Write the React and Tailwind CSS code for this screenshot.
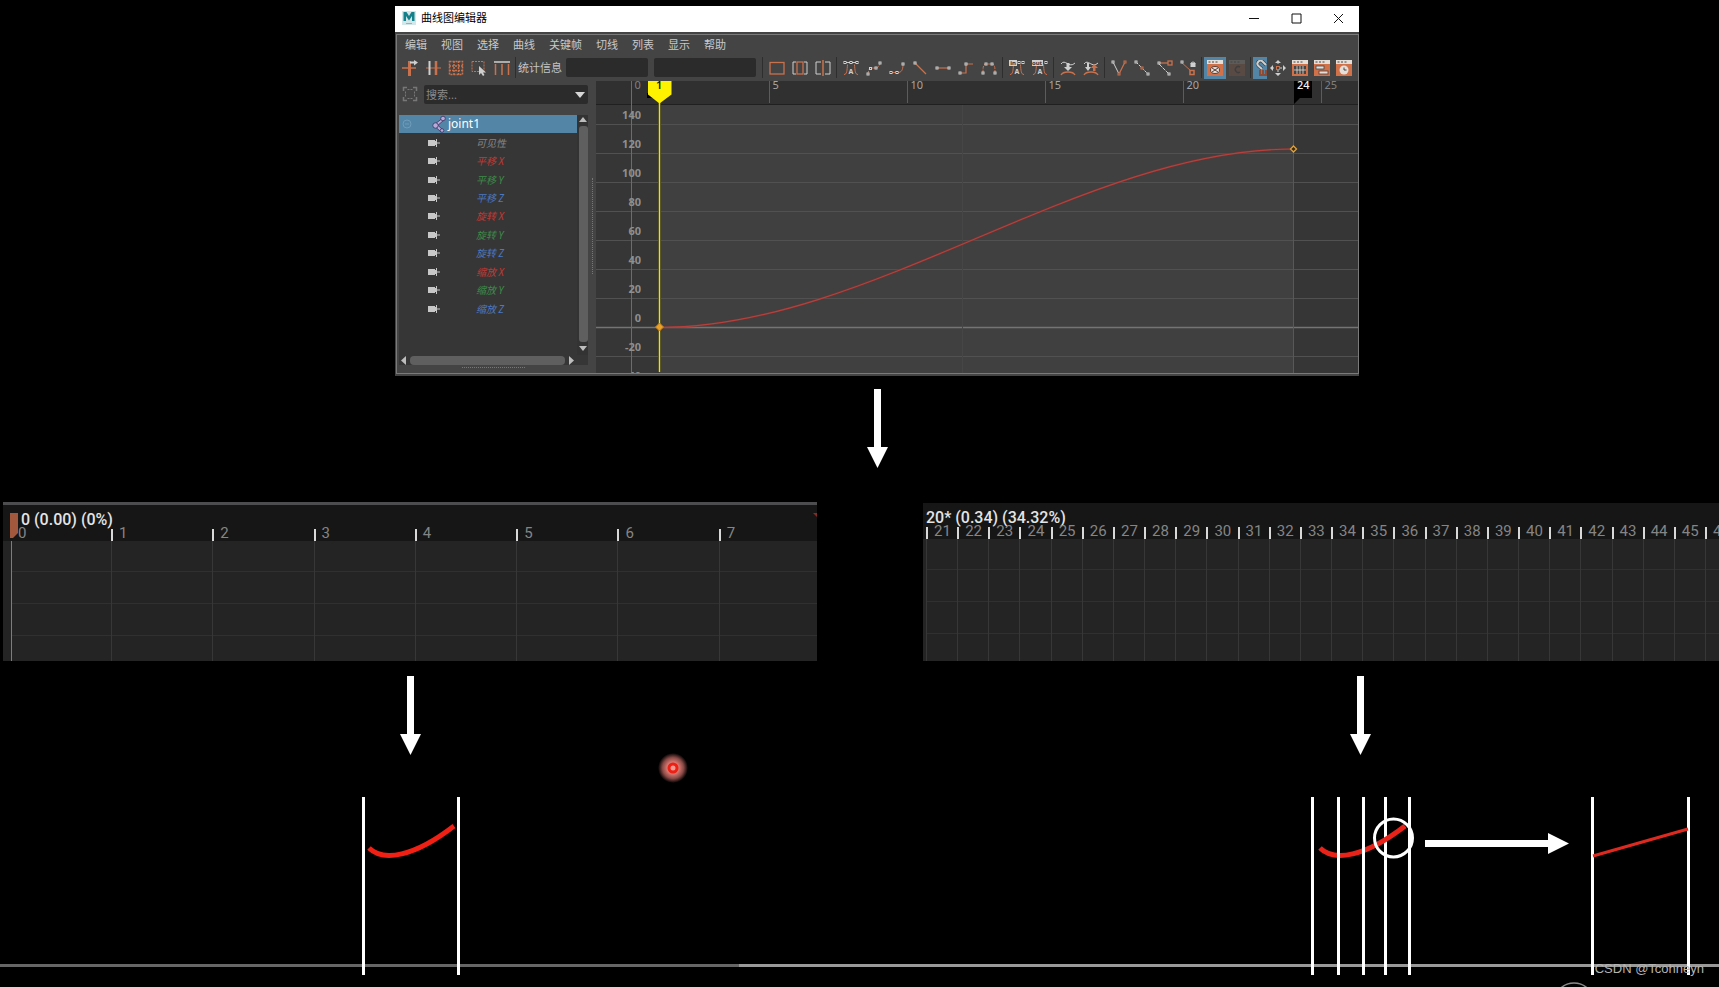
import React from 'react'
import clsx from 'clsx'

const ORANGE = '#c9714d'
const LIGHT = '#cfcfcf'

const menus = ['编辑', '视图', '选择', '曲线', '关键帧', '切线', '列表', '显示', '帮助']

const channels = [
    { name: '可见性', color: 'text-[#858585]' },
    { name: '平移 X', color: 'text-[#c23a35]' },
    { name: '平移 Y', color: 'text-[#3d8c49]' },
    { name: '平移 Z', color: 'text-[#4c78c4]' },
    { name: '旋转 X', color: 'text-[#c23a35]' },
    { name: '旋转 Y', color: 'text-[#3d8c49]' },
    { name: '旋转 Z', color: 'text-[#4c78c4]' },
    { name: '缩放 X', color: 'text-[#c23a35]' },
    { name: '缩放 Y', color: 'text-[#3d8c49]' },
    { name: '缩放 Z', color: 'text-[#4c78c4]' },
]

/* small hollow key handle used by most of the tangent icons */
function Key({ x, y, color = LIGHT }) {
    return <rect x={x - 1} y={y - 1} width="2" height="2" fill="#444" stroke={color} />
}

function Bell() {
    return (
        <>
            <path d="M1 14.500c3 0 3-4 3.500-10M15 14.500c-3 0-3-4-3.500-10" fill="none" stroke={ORANGE} />
            <text x="8" y="14" textAnchor="middle" fontSize="7" fontWeight="700" fill={LIGHT}>A</text>
        </>
    )
}

function PanelFrame({ children }) {
    return (
        <>
            <rect x="0" y="0" width="16" height="16" fill="#d0714a" />
            <rect x="0" y="0" width="16" height="4" fill="#e4ddd8" />
            <path d="M1.500 2h2M5 2h2M8.500 2h2" stroke="#444" />
            {children}
        </>
    )
}

const icons = {
    insertKey: (
        <>
            <path d="M0 8h14" stroke={ORANGE} strokeWidth="1.500" />
            <path d="M7.500 1v15" stroke={ORANGE} strokeWidth="3" />
            <path d="M8 2.500h5" stroke={LIGHT} strokeWidth="2" />
            <path d="M12 0l4 2.500-4 3z" fill={LIGHT} />
        </>
    ),
    addKey: (
        <>
            <path d="M1 8h15" stroke={ORANGE} strokeWidth="1" />
            <path d="M4.500 1v14" stroke={LIGHT} strokeWidth="2" />
            <path d="M11 1v14" stroke={ORANGE} strokeWidth="2.500" />
        </>
    ),
    lattice: (
        <g stroke={ORANGE} strokeWidth="1.500" strokeDasharray="2 1" fill="none">
            <rect x="1.500" y="1.500" width="13" height="13" />
            <path d="M6 1v14M10.500 1v14M1 6h14M1 10.500h14" />
        </g>
    ),
    region: (
        <>
            <rect x="1" y="1.500" width="12" height="10" fill="none" stroke={ORANGE} strokeDasharray="2 1" />
            <path d="M8 6v9l2-2 2 3 1.500-1-1.500-2.500h3z" fill={LIGHT} />
        </>
    ),
    retime: (
        <>
            <path d="M0 2h16" stroke={LIGHT} strokeWidth="1.500" />
            <path d="M1.500 4v11M8 4v11M14.500 4v11" stroke={ORANGE} strokeWidth="1.500" />
        </>
    ),
    frameAll: <rect x="1" y="2.500" width="14" height="11.500" fill="none" stroke={ORANGE} strokeWidth="1.300" />,
    frameRange: (
        <>
            <path d="M4 2H1v12h3M12 2h3v12h-3" fill="none" stroke={LIGHT} />
            <rect x="5" y="2" width="6" height="12" fill="none" stroke={ORANGE} strokeWidth="1.300" />
        </>
    ),
    center: (
        <>
            <path d="M6 2H1v12h5M10 2h5v12h-5" fill="none" stroke={LIGHT} />
            <path d="M8 0v16" stroke={ORANGE} strokeWidth="1.500" />
        </>
    ),
    auto: (
        <>
            <path d="M1 2.500h14" stroke={LIGHT} />
            <Bell />
            <Key x={2} y={2.500} /><Key x={8} y={2.500} /><Key x={14} y={2.500} />
        </>
    ),
    spline: (
        <>
            <path d="M2 14c1-8 4-5.500 7-6s4-1 5-5" fill="none" stroke={ORANGE} strokeDasharray="3 1" />
            <Key x={2} y={14} /><Key x={4.500} y={8.500} /><Key x={10} y={8} /><Key x={14} y={3} />
        </>
    ),
    clamped: (
        <>
            <path d="M1 12.500h8c3 0 5-2 5-8" fill="none" stroke={ORANGE} />
            <Key x={2} y={12.500} /><Key x={8} y={12.500} /><Key x={14} y={4} />
        </>
    ),
    linear: (
        <>
            <path d="M3 3l11 11" stroke={ORANGE} strokeWidth="1.200" />
            <Key x={3} y={3} />
        </>
    ),
    flat: (
        <>
            <path d="M2 8h12" stroke={ORANGE} strokeWidth="1.200" />
            <Key x={2} y={8} /><Key x={14} y={8} />
        </>
    ),
    stepped: (
        <>
            <path d="M2 13h6V4h7" fill="none" stroke={ORANGE} strokeWidth="1.200" />
            <Key x={2} y={13} /><Key x={8} y={4} />
        </>
    ),
    plateau: (
        <>
            <path d="M2 13c0-5 0-9 3-9h6c3 0 3 4 3 9" fill="none" stroke={ORANGE} strokeDasharray="3 1" />
            <Key x={2} y={13} /><Key x={5} y={4} /><Key x={11} y={4} /><Key x={14} y={13} />
        </>
    ),
    inTangent: (
        <>
            <Bell />
            <rect x="0" y="0" width="8" height="6" fill={LIGHT} />
            <text x="4" y="5" textAnchor="middle" fontSize="6" fontWeight="700" fill="#333">in</text>
            <Key x={10} y={2.500} /><Key x={14} y={2.500} />
        </>
    ),
    outTangent: (
        <>
            <Bell />
            <rect x="0" y="0" width="11" height="6" fill={LIGHT} />
            <text x="5" y="5" textAnchor="middle" fontSize="6" fontWeight="700" fill="#333">out</text>
            <Key x={14} y={2.500} />
        </>
    ),
    bufferSnap: (
        <>
            <path d="M1 4c4-6 8 5 14-1" fill="none" stroke={LIGHT} />
            <path d="M6.500 3h3v4H12l-4 4-4-4h2.500z" fill={LIGHT} />
            <path d="M1 15c2-4 12-4 14 0" fill="none" stroke={ORANGE} strokeWidth="1.300" />
        </>
    ),
    bufferSwap: (
        <>
            <path d="M1 4c4-6 8 5 14-1" fill="none" stroke={LIGHT} />
            <path d="M4 3h2v4h2l-3 4-3-4h2z" fill={LIGHT} />
            <path d="M10 11h2.500V8H15l-4-4-3 4h2z" fill={ORANGE} />
            <path d="M1 15c2-4 12-4 14 0" fill="none" stroke={ORANGE} strokeWidth="1.300" />
        </>
    ),
    breakTangent: (
        <>
            <path d="M2 2l6 12" stroke={LIGHT} /><path d="M8 14l6-12" stroke={ORANGE} strokeWidth="1.300" />
            <Key x={2} y={2} /><Key x={8} y={14} color={ORANGE} /><Key x={14} y={2} color={ORANGE} />
        </>
    ),
    unify: (
        <>
            <path d="M2 2l12 12" stroke={LIGHT} strokeDasharray="3 1" />
            <Key x={2} y={2} /><Key x={8} y={8} color={ORANGE} /><Key x={14} y={14} />
        </>
    ),
    freeLength: (
        <>
            <path d="M2 3h11" stroke={ORANGE} strokeWidth="1.300" />
            <path d="M2 4l10 10" stroke={LIGHT} strokeDasharray="4 1" />
            <Key x={2} y={3} /><Key x={12} y={14} />
            <rect x="11" y="1" width="4" height="4" fill="#444" stroke={ORANGE} strokeWidth="1.300" />
        </>
    ),
    lockLength: (
        <>
            <path d="M1 2l10 9" stroke={ORANGE} />
            <Key x={2} y={2} />
            <rect x="10" y="10.500" width="4" height="4" fill="#444" stroke={ORANGE} strokeWidth="1.500" />
            <path d="M11 4a2 2 0 0 1 4 0" fill="none" stroke={LIGHT} />
            <rect x="10.500" y="3" width="5" height="4" fill={LIGHT} />
        </>
    ),
    timeSnap: (
        <PanelFrame>
            <ellipse cx="8" cy="10" rx="4.500" ry="3.500" fill="#e4ddd8" stroke="#5a4038" />
            <path d="M5 8l6 4M11 8l-6 4" stroke="#5a4038" />
        </PanelFrame>
    ),
    valueSnap: (
        <g opacity="0.150">
            <PanelFrame><path d="M11 7a3 3 0 1 0 0 5" fill="none" stroke="#222" strokeWidth="1.500" /></PanelFrame>
        </g>
    ),
    move: (
        <>
            <path d="M8 2v12M2 8h12" stroke={LIGHT} strokeDasharray="2 2" />
            <path d="M8 0l3 3H5zM8 16l3-3H5zM0 8l3-3v6zM16 8l-3-3v6z" fill={LIGHT} />
            <rect x="6.500" y="6.500" width="3" height="3" fill="#444" stroke={ORANGE} />
        </>
    ),
    dopeSheet: (
        <PanelFrame>
            <rect x="2" y="6" width="12" height="8" fill="#444" />
            <path d="M2 10h12M5 6v8M8 6v8M11 6v8" stroke="#e4ddd8" strokeWidth="0.800" />
        </PanelFrame>
    ),
    trax: (
        <PanelFrame>
            <rect x="2" y="6" width="8" height="3" fill="#e4ddd8" stroke="#444" strokeWidth="0.800" />
            <rect x="5" y="11" width="9" height="3" fill="#e4ddd8" stroke="#444" strokeWidth="0.800" />
        </PanelFrame>
    ),
    timeEditor: (
        <PanelFrame>
            <circle cx="8" cy="10" r="4.500" fill="#e4ddd8" />
            <path d="M8 7.500V10h2.500" fill="none" stroke="#444" />
        </PanelFrame>
    ),
}

function Tool({ name, wide = true, active }) {
    return (
        <button
            aria-label={name}
            className={clsx('flex h-[22px] shrink-0 items-center justify-center', wide ? 'w-[23px]' : 'w-[22px]', active && 'bg-[#5285a6]')}
        >
            <svg viewBox="0 0 16 16" className="size-4">{icons[name]}</svg>
        </button>
    )
}

function Separator() {
    return <span className="mx-[2px] h-[21px] w-px shrink-0 bg-[#2e2e2e]" />
}

function ToolBar() {
    return (
        <div className="flex h-[25px] items-center pb-[2px] pl-px">
            {['insertKey', 'addKey', 'lattice', 'region', 'retime'].map((n) => <Tool key={n} name={n} />)}
            <Separator />
            <label htmlFor="stat-time" className="shrink-0 text-[11px] leading-4 text-[#c4c4c4]">统计信息</label>
            <input id="stat-time" className="ml-1 h-[19px] w-[82px] rounded-xs bg-[#2b2b2b] px-1 text-[11px]" />
            <input aria-label="统计信息值" className="mr-1 ml-[6px] h-[19px] w-[102px] rounded-xs bg-[#2b2b2b] px-1 text-[11px]" />
            <Separator />
            {['frameAll', 'frameRange', 'center'].map((n) => <Tool key={n} name={n} />)}
            <Separator />
            {['auto', 'spline', 'clamped', 'linear', 'flat', 'stepped', 'plateau'].map((n) => <Tool key={n} name={n} />)}
            <Separator />
            {['inTangent', 'outTangent'].map((n) => <Tool key={n} name={n} />)}
            <Separator />
            {['bufferSnap', 'bufferSwap'].map((n) => <Tool key={n} name={n} />)}
            <Separator />
            {['breakTangent', 'unify', 'freeLength', 'lockLength'].map((n) => <Tool key={n} name={n} />)}
            <Separator />
            <Tool name="timeSnap" wide={false} active />
            <Tool name="valueSnap" wide={false} />
            <Separator />
            <button aria-label="magnet" className="flex h-[22px] w-[14px] shrink-0 items-center bg-[#5285a6]">
                <svg viewBox="0 0 14 16" className="h-4 w-[14px]">
                    <path d="M9 9L5.500 6a3 3 0 0 1 4-4.500L13 5" fill="none" stroke="#3b4650" strokeWidth="3.500" />
                    <path d="M9 9L5.500 6a3 3 0 0 1 4-4.500L13 5" fill="none" stroke={LIGHT} strokeWidth="2" />
                    <path d="M7 10v5h7M10 10v5M13 10v5" fill="none" stroke="#8d4a35" strokeWidth="2" />
                </svg>
            </button>
            {['move', 'dopeSheet', 'trax', 'timeEditor'].map((n) => <Tool key={n} name={n} wide={false} />)}
        </div>
    )
}

function Outliner() {
    return (
        <div className="flex w-[199px] shrink-0 flex-col pl-[2px]">
            <div className="flex h-[34px] items-start pt-1">
                <svg viewBox="0 0 16 16" className="mt-px ml-[3px] size-4" fill="none" stroke="#777">
                    <path d="M1.500 5V1.500H5M11 1.500h3.500V5M14.500 11v3.500H11M5 14.500H1.500V11" strokeWidth="1.500" />
                    <path d="M3.500 5.500v5M12.500 5.500v5M5.500 3.500h5M5.500 12.500h5" strokeDasharray="2 1" />
                </svg>
                <div className="ml-[6px] flex h-[19px] w-[164px] items-center rounded-xs bg-[#2b2b2b]">
                    <input
                        aria-label="搜索"
                        placeholder="搜索..."
                        className="h-full min-w-0 flex-1 pl-[2px] text-[11px] text-[#ccc] placeholder:text-[#8a8a8a]"
                    />
                    <button aria-label="搜索选项" className="flex h-full w-4 items-center justify-center">
                        <svg viewBox="0 0 10 6" className="h-[6px] w-[10px]"><path d="M0 0h10L5 6z" fill="#d6d6d6" /></svg>
                    </button>
                </div>
            </div>

            <div className="flex">
                <div className="w-[189px] bg-[#363636]">
                    <div className="flex h-[240px]">
                        {/* joint and its channels */}
                        <ul className="grid h-[203px] flex-1 auto-rows-fr">
                            <li className="flex items-center bg-[#5285a6] pl-[3px]">
                                <svg viewBox="0 0 10 10" className="size-[10px]" fill="none" stroke="#6f9cb8">
                                    <circle cx="5" cy="5" r="4" /><path d="M3 5h4" />
                                </svg>
                                <svg viewBox="0 0 14 18" className="ml-[20px] h-[18px] w-[14px]" fill="#b9a9d8" stroke="#3c3260" strokeWidth="0.800">
                                    <path d="M9.500 4L3 9l1.500 2.500L12 5z" />
                                    <path d="M3 11.500L9 17l1.500-2.500L5 9.500z" />
                                    <circle cx="11" cy="3.500" r="2.300" /><circle cx="3.500" cy="10.500" r="2.700" /><circle cx="10" cy="15.500" r="1.800" />
                                </svg>
                                <span className="ml-[2px] text-[12px] leading-4 text-white">joint1</span>
                            </li>
                            {channels.map((c) => (
                                <li key={c.name} className="flex items-center pl-[29px]">
                                    <svg viewBox="0 0 12 8" className="h-2 w-3" fill="#c8c8c8">
                                        <path d="M0 1h7v6H0zM7 2h1V0h1v8H8V6H7zM9 3.500h3v1H9z" />
                                    </svg>
                                    <span className={clsx('ml-[36px] text-[10px] leading-4 italic', c.color)}>{c.name}</span>
                                </li>
                            ))}
                        </ul>
                        <div className="flex w-[11px] flex-col items-center gap-1 bg-[#333] pt-[2px] pb-1 pl-px">
                            <svg viewBox="0 0 8 5" className="h-[5px] w-2"><path d="M0 5h8L4 0z" fill="#bdbdbd" /></svg>
                            <div className="w-[9px] flex-1 rounded-[3px] bg-[#5f5f5f]" />
                            <svg viewBox="0 0 8 5" className="h-[5px] w-2"><path d="M0 0h8L4 5z" fill="#bdbdbd" /></svg>
                        </div>
                    </div>
                    <div className="flex h-[10px] items-center gap-1 pr-[14px] pl-[2px]">
                        <svg viewBox="0 0 5 9" className="h-[9px] w-[5px]"><path d="M5 0v9L0 4.500z" fill="#bdbdbd" /></svg>
                        <div className="h-[9px] flex-1 rounded-[4px] bg-[#5f5f5f]" />
                        <svg viewBox="0 0 5 9" className="h-[9px] w-[5px]"><path d="M0 0v9l5-4.500z" fill="#bdbdbd" /></svg>
                    </div>
                </div>
                <div className="mt-[63px] ml-1 h-[96px] border-l border-dotted border-[#777]" />
            </div>
            <div className="mt-[2px] ml-[63px] w-[63px] border-t border-dotted border-[#777]" />
        </div>
    )
}

const rulerFrames = [0, 5, 10, 15, 20, 25]
const values = [140, 120, 100, 80, 60, 40, 20, 0, -20, -40]

function CurveGraph() {
    const frameX = (f) => Math.round(36 + f * 27.6) - 0.5
    const valueY = (v) => 246.5 - (v / 20) * 29

    return (
        <svg viewBox="0 0 762 292" className="min-w-0 flex-1">
            <rect width="762" height="292" fill="#363636" />
            <rect x="63" y="24" width="634" height="268" fill="#404040" />
            {values.map((v) => (
                <path key={v} d={`M0 ${valueY(v)}H762`} stroke={v === 0 ? '#747474' : '#515151'} strokeWidth={v === 0 ? 1.5 : 1} />
            ))}
            <path d="M366.500 24v268" stroke="#464646" />
            <path d="M697.500 24v268" stroke="#585858" />

            {/* time ruler */}
            <rect width="762" height="23" fill="#303030" />
            <path d="M0 23.500h762" stroke="#202020" />
            {rulerFrames.map((f) => (
                <g key={f}>
                    <path d={`M${frameX(f)} 0v22`} stroke="#5c5c5c" />
                    <text x={frameX(f) + 3} y="8" fontSize="11" fill={f === 0 || f === 25 ? '#808080' : '#a6a6a6'}>{f}</text>
                </g>
            ))}
            <path d="M35.500 0v292" stroke="#6c6c6c" />
            <path d="M698 0h18v17h-12l-6 6z" fill="#000" />
            <text x="701" y="8" fontSize="11" fontWeight="500" fill="#f2f2f2">24</text>

            {values.map((v) => (
                <text key={v} x="45" y={valueY(v) - 6} textAnchor="end" fontSize="11" fontWeight="700" fill="#8f8f8f">{v}</text>
            ))}

            <path d="M63.500 246.500C275 246.500 486 68 697.500 68" fill="none" stroke="#7a3431" strokeWidth="2.500" opacity="0.500" />
            <path d="M63.500 246.500C275 246.500 486 68 697.500 68" fill="none" stroke="#b8403c" strokeWidth="1.200" />

            {/* current time */}
            <path d="M63.500 20v271" stroke="#5c5a22" strokeWidth="3" />
            <path d="M63.500 20v271" stroke="#e3dc4a" />
            <path d="M51 12h6v5h-6z" fill="#000" />
            <path d="M52 0h23.500v13.500L63.500 22.500 52 13.500z" fill="#fff200" />
            <text x="60" y="8" fontSize="11" fontWeight="600" fill="#1c1c00">1</text>

            <path d="M63.500 242l4 4-4 4-4-4z" fill="#eaa12a" stroke="#c97f17" />
            <path d="M697.500 65l3 3-3 3-3-3z" fill="#3a2c10" stroke="#e0a23c" strokeWidth="1.300" />
        </svg>
    )
}

function GraphEditor() {
    return (
        <div className="w-[964px] max-w-full bg-[#444] pb-[2px]">
            <div className="flex h-[26px] items-center bg-white pb-[2px] pl-[7px]">
                <svg viewBox="0 0 14 14" className="size-[14px]">
                    <rect width="14" height="14" fill="#d3e6ea" />
                    <path d="M1.500 10V1h3L7 5l2.500-4h3v9H10V5L7 9.500 4 5v5z" fill="#14808a" />
                    <path d="M4 12.500h6" stroke="#8cb9c0" />
                </svg>
                <h1 className="ml-[5px] flex-1 text-[11px] leading-4 text-black">曲线图编辑器</h1>
                <button aria-label="最小化" className="flex h-full w-[42px] items-center justify-center">
                    <svg viewBox="0 0 11 11" className="size-[11px]" stroke="#111"><path d="M0 5.500h10" /></svg>
                </button>
                <button aria-label="最大化" className="flex h-full w-[42px] items-center justify-center">
                    <svg viewBox="0 0 11 11" className="size-[11px]" fill="none" stroke="#111"><path d="M1 1h9v9H1z" /></svg>
                </button>
                <button aria-label="关闭" className="flex h-full w-[42px] items-center justify-center">
                    <svg viewBox="0 0 11 11" className="size-[11px]" stroke="#111"><path d="M1 1l9 9M10 1l-9 9" /></svg>
                </button>
            </div>
            <div className="mt-[2px] ml-px border border-[#7a7a7a]">
                <nav className="flex h-[21px] items-center gap-[14px] pb-[2px] pl-2 text-[11px] leading-4 text-[#c9c9c9]">
                    {menus.map((m) => <button key={m}>{m}</button>)}
                </nav>
                <ToolBar />
                <div className="flex h-[292px]">
                    <Outliner />
                    <CurveGraph />
                </div>
            </div>
        </div>
    )
}

function DownArrow() {
    return (
        <svg viewBox="0 0 21 79" className="h-[79px] w-[21px]" fill="#fff">
            <path d="M7 0h7v58h7L10.500 79 0 58h7z" />
        </svg>
    )
}

function Timeline({ title, titleClass, first, columns, count, marker }) {
    const frames = Array.from({ length: count }, (_, i) => first + i)

    return (
        <div className="relative flex flex-1 flex-col overflow-hidden bg-[#242424] font-['Roboto',sans-serif]">
            <div className="h-9 bg-[#161616]">
                <p className={clsx('h-6 text-[16px] leading-[30px] font-medium whitespace-nowrap text-[#e4e4e4]', titleClass)}>{title}</p>
            </div>
            {/* the columns start inside the header so that the ticks sit on its lower edge */}
            <div className={clsx('-mt-3 grid flex-1', columns)}>
                {frames.map((f, i) => (
                    <div key={f} className="flex min-w-0 flex-col">
                        <div
                            className={clsx(
                                'h-3 border-l-2 text-[15px] leading-[8px] text-[#858585]',
                                marker && i === 0 ? 'border-transparent pl-[5px]' : 'border-[#d8d8d8] pl-[6px]',
                            )}
                        >
                            {f}
                        </div>
                        <div className={clsx('flex flex-1 flex-col border-l', marker && i === 0 ? 'border-[#4f9a5c]' : 'border-[#373737]')}>
                            <div className="h-[31px] border-b border-[#303030]" />
                            <div className="h-8 border-b border-[#303030]" />
                            <div className="h-8 border-b border-[#303030]" />
                        </div>
                    </div>
                ))}
            </div>
            {marker && (
                <svg viewBox="0 0 8 25" className="absolute top-2 left-[7px] h-[25px] w-2">
                    <path d="M0 0h8v20l-5 5H0z" fill="#a2583c" />
                </svg>
            )}
            {marker && (
                <svg viewBox="0 0 4 4" className="absolute top-2 right-0 size-1"><path d="M0 0h4v4z" fill="#8a2a22" /></svg>
            )}
        </div>
    )
}

function Bars({ xs }) {
    return xs.map((x) => <path key={x} d={`M${x} 0v178`} stroke="#fff" strokeWidth="3" />)
}

function App() {
    return (
        <div className="relative flex min-h-screen flex-col overflow-hidden bg-black font-['Noto_Sans','Noto_Sans_CJK_SC',sans-serif]">
            <div className="flex flex-col items-center pt-[6px] pl-[35px]">
                <GraphEditor />
                <div className="mt-[13px]"><DownArrow /></div>
            </div>

            <div className="relative mt-[34px]">
                {/* ground line behind the sketches */}
                <div className="absolute inset-x-0 bottom-2 flex h-[3px]">
                    <div className="w-[43%] bg-[#666]" />
                    <div className="flex-1 bg-[#999]" />
                </div>

                <div className="relative grid grid-cols-[814fr_796fr] gap-x-[106px] pl-[3px]">
                    <section className="flex min-w-0 flex-col items-center">
                        <div className="flex h-[159px] w-full border-t-3 border-[#4d4d50]">
                            <Timeline
                                title="0 (0.00) (0%)"
                                titleClass="pl-[18px]"
                                first={0}
                                count={8}
                                columns="grid-cols-[100px_repeat(6,minmax(0,101fr))_minmax(0,98fr)] pl-2"
                                marker
                            />
                        </div>
                        <div className="mt-[15px]"><DownArrow /></div>
                        <svg viewBox="0 0 100 178" className="mt-[42px] h-[178px] w-[100px]">
                            <Bars xs={[3.5, 98.5]} />
                            <path d="M9 51C23 65 54 60 94 29" fill="none" stroke="#f02014" strokeWidth="5" />
                        </svg>
                    </section>

                    <section className="flex min-w-0 flex-col">
                        <div className="flex h-[159px] w-full pt-px">
                            <Timeline
                                title="20* (0.34) (34.32%)"
                                titleClass="pl-[3px]"
                                first={21}
                                count={26}
                                columns="grid-cols-[repeat(25,minmax(0,1fr))_14px] pl-[3px]"
                            />
                        </div>
                        <div className="mt-[15px] mr-[29px] ml-auto flex items-end">
                            <div className="flex flex-col items-center">
                                <DownArrow />
                                <svg viewBox="0 0 100 178" className="mt-[42px] h-[178px] w-[100px] overflow-visible">
                                    <Bars xs={[75.5]} />
                                    <path d="M10 51C24 65 55 60 95 29" fill="none" stroke="#e8241a" strokeWidth="5" />
                                    <Bars xs={[2.5, 28.5, 53.5, 99.5]} />
                                    <circle cx="83.500" cy="41" r="19" fill="none" stroke="#fff" strokeWidth="3" />
                                </svg>
                            </div>
                            <svg viewBox="0 0 144 21" className="mr-[21px] mb-[121px] ml-[15px] h-[21px] w-[144px]" fill="#fff">
                                <path d="M0 7h123V0l21 10.500L123 21v-7H0z" />
                            </svg>
                            <svg viewBox="0 0 100 178" className="h-[178px] w-[100px]">
                                <Bars xs={[2.5, 98.5]} />
                                <path d="M3 59L98 32" stroke="#dc2a20" strokeWidth="3" />
                            </svg>
                        </div>
                    </section>
                </div>

                {/* laser pointer */}
                <svg viewBox="0 0 32 32" className="absolute top-[250px] left-[657px] size-8">
                    <defs>
                        <radialGradient id="glow">
                            <stop offset="0.400" stopColor="#d8776f" />
                            <stop offset="0.700" stopColor="#8a4a46" />
                            <stop offset="1" stopColor="#000" />
                        </radialGradient>
                    </defs>
                    <circle cx="16" cy="16" r="15" fill="url(#glow)" />
                    <circle cx="16" cy="16" r="4" fill="#f59a90" stroke="#ec2015" strokeWidth="3" />
                </svg>
            </div>

            <svg viewBox="0 0 28 5" className="absolute right-[131px] bottom-0 h-[5px] w-7">
                <circle cx="14" cy="21" r="20" fill="none" stroke="#8a8a8a" strokeWidth="1.500" />
            </svg>
            <p className="absolute right-[15px] bottom-[10px] font-['Liberation_Sans',sans-serif] text-[13px] leading-4 text-[#b4b4b4]">
                CSDN @Tcohneyn
            </p>
        </div>
    )
}

export default App
